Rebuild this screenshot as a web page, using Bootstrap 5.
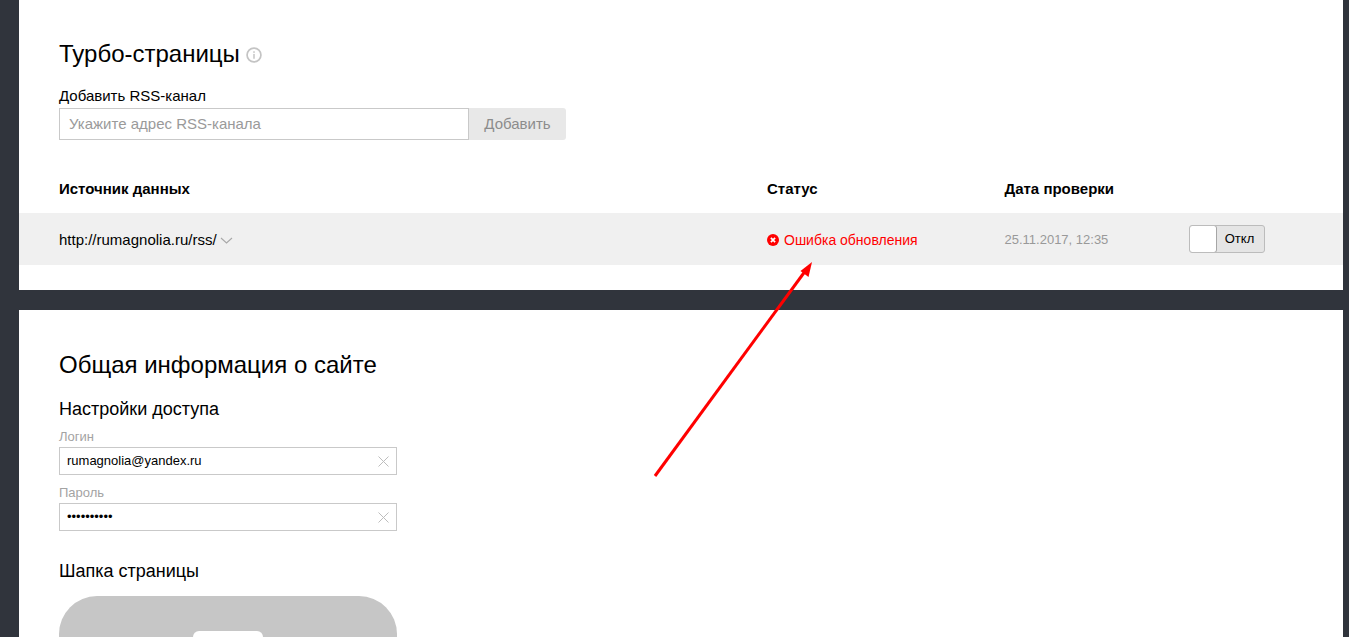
<!DOCTYPE html>
<html lang="ru">
<head>
<meta charset="utf-8">
<title>Турбо-страницы</title>
<link href="https://cdn.jsdelivr.net/npm/bootstrap@5.3.0/dist/css/bootstrap.min.css" rel="stylesheet">
<style>
html,body{height:637px;overflow:hidden}
body{background:#30343c;font-family:"Liberation Sans",Arial,sans-serif;color:#000;position:relative}
.sheet{background:#fff;margin:0 6px 20px 19px}
.sheet-top{height:290px;padding-top:39px}
.sheet-bottom{height:327px;padding:40px 40px 0;margin-bottom:0;overflow:hidden}
.pad-x{padding:0 40px}
.ttl{font-size:24px;line-height:30px;font-weight:400;margin:0;height:30px}
.ttl-info{margin-left:6px;vertical-align:-1px}
.add-label{font-size:15px;line-height:16px;margin-top:19px;height:20px}
.rss-input{width:410px;height:32px;border:1px solid #c9c9c9;border-radius:0;font-size:15px;padding:0 9px 2px;color:#000;box-shadow:none}
.rss-input::placeholder{color:#9a9a9a;opacity:1}
.rss-btn{width:97px;height:32px;background:#e8e8e8;border:0;border-radius:0 3px 3px 0;color:#8c8c8c;font-size:15px;padding:0}
.head-row{margin-top:41px;height:16px;font-weight:700;font-size:15px;line-height:16px}
.col-src{width:708px;flex:none}
.col-stat{width:237.5px;flex:none}
.col-date{width:184.5px;flex:none}
.data-row{margin-top:16px;height:52px;background:#f0f0f0;padding-top:2px}
.src-link{font-size:15px;color:#000;white-space:nowrap}
.src-chev{margin-left:3px}
.err{color:#f00;font-size:14px;white-space:nowrap}
.err svg{margin-right:5px;vertical-align:-1px}
.chk-date{font-size:13px;color:#999}
.tumbler{width:76px;height:28px;margin-top:-2px;border:1px solid #bcbcbc;border-radius:3px;background:#e5e5e5;font-size:13px;color:#000;overflow:hidden}
.tumbler-knob{width:28px;height:28px;margin:-1px 0 0 -1px;background:#fff;border:1px solid #a6a6a6;border-radius:3px;flex:none}
.tumbler-txt{flex:1;text-align:center;padding-right:2px}
.ttl2{font-size:24px;line-height:30px;font-weight:400;margin:0}
.sub{font-size:18px;line-height:22px;font-weight:400;margin:0}
.sub-access{margin-top:18px}
.lbl{font-size:13px;line-height:14px;color:#a3a3a3;height:14px}
.lbl-first{margin-top:10px}
.lbl-next{margin-top:11px}
.fld{width:338px;height:28px;margin-top:3px;border:1px solid #c9c9c9;padding:0 7px;font-size:13px;line-height:26px}
.dots{font-size:13px;letter-spacing:0}
.sub-head{margin-top:29px}
.phone{width:338px;height:200px;margin-top:14px;background:#c6c6c6;border-radius:38px 38px 0 0;padding-top:35px}
.speaker{width:70px;height:60px;background:#fff;border-radius:6px}
.arrow{position:absolute;left:0;top:0;pointer-events:none}
</style>
</head>
<body>
<section class="sheet sheet-top">
  <div class="pad-x">
    <h1 class="ttl">Турбо-страницы<svg class="ttl-info" width="16" height="16" viewBox="0 0 15 15"><circle cx="7.5" cy="7.500" r="6.500" fill="none" stroke="#c4c4c4" stroke-width="1.600"/><rect x="6.800" y="6.500" width="1.400" height="4.500" fill="#c4c4c4"/><rect x="6.800" y="4" width="1.400" height="1.500" fill="#c4c4c4"/></svg></h1>
    <div class="add-label">Добавить RSS-канал</div>
    <div class="d-flex">
      <input class="form-control rss-input" type="text" placeholder="Укажите адрес RSS-канала">
      <button class="btn rss-btn" type="button">Добавить</button>
    </div>
    <div class="d-flex head-row">
      <div class="col-src">Источник данных</div>
      <div class="col-stat">Статус</div>
      <div class="col-date">Дата проверки</div>
    </div>
  </div>
  <div class="data-row d-flex align-items-center pad-x">
    <div class="col-src src-link">http://rumagnolia.ru/rss/<svg class="src-chev" width="13" height="7" viewBox="0 0 13 7"><path d="M1 1l5.500 5L12 1" fill="none" stroke="#a8a8a8" stroke-width="1.100"/></svg></div>
    <div class="col-stat err"><svg width="12" height="12" viewBox="0 0 12 12"><circle cx="6" cy="6" r="6" fill="#f00"/><path d="M3.900 3.900l4.200 4.200M8.100 3.900l-4.200 4.200" stroke="#fff" stroke-width="1.700"/></svg>Ошибка обновления</div>
    <div class="col-date chk-date">25.11.2017, 12:35</div>
    <div class="tumbler d-flex align-items-center"><span class="tumbler-knob"></span><span class="tumbler-txt">Откл</span></div>
  </div>
</section>
<section class="sheet sheet-bottom">
  <h2 class="ttl2">Общая информация о сайте</h2>
  <h3 class="sub sub-access">Настройки доступа</h3>
  <div class="lbl lbl-first">Логин</div>
  <div class="fld d-flex justify-content-between align-items-center"><span>rumagnolia@yandex.ru</span><svg width="11" height="11" viewBox="0 0 11 11"><path d="M.5.5l10 10M10.500.5l-10 10" stroke="#bdbdbd" stroke-width="1"/></svg></div>
  <div class="lbl lbl-next">Пароль</div>
  <div class="fld d-flex justify-content-between align-items-center"><span class="dots">••••••••••</span><svg width="11" height="11" viewBox="0 0 11 11"><path d="M.5.5l10 10M10.500.5l-10 10" stroke="#bdbdbd" stroke-width="1"/></svg></div>
  <h3 class="sub sub-head">Шапка страницы</h3>
  <div class="phone d-flex justify-content-center"><div class="speaker"></div></div>
</section>
<svg class="arrow" width="1349" height="637" viewBox="0 0 1349 637"><path d="M655 476L806 270" stroke="#f00" stroke-width="3" fill="none"/><path d="M812 262L808.500 277L800.500 271Z" fill="#f00"/></svg>
<script src="https://cdn.jsdelivr.net/npm/bootstrap@5.3.0/dist/js/bootstrap.bundle.min.js"></script>
</body>
</html>
